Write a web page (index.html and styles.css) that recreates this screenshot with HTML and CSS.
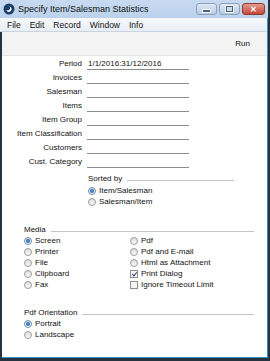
FILE: index.html
```html
<!DOCTYPE html>
<html lang="en">
<head>
  <meta charset="UTF-8">
  <title>Specify Item/Salesman Statistics</title>
  <link rel="stylesheet" href="styles.css">
</head>
<body>
  <div class="window">
    <div class="titlebar">
      <svg class="app-icon" width="12" height="12" viewBox="0 0 12 12">
        <circle cx="6" cy="6" r="5.5" fill="#1d3f6e"/>
        <path d="M3.2 7.8 C4.5 9.6 8 9.2 8.6 6.6 C8.9 5 7.6 3.6 6.2 3.2 C7.4 4.2 7.4 6 6.2 6.8 C5.2 7.5 4 7.4 3.2 7.8 Z" fill="#fff"/>
      </svg>
      <span class="title">Specify Item/Salesman Statistics</span>
      <div class="win-btns">
        <div class="win-btn"><span class="min-glyph"></span></div>
        <div class="win-btn"><span class="max-glyph"></span></div>
        <div class="win-btn close">&#x2715;</div>
      </div>
    </div>
    <div class="menubar">
      <span>File</span>
      <span>Edit</span>
      <span>Record</span>
      <span>Window</span>
      <span>Info</span>
    </div>
    <div class="toolbar">
      <span class="run">Run</span>
    </div>
    <div class="content">
      <div class="fields">
        <div class="row"><label>Period</label><div class="field">1/1/2016:31/12/2016</div></div>
        <div class="row"><label>Invoices</label><div class="field"></div></div>
        <div class="row"><label>Salesman</label><div class="field"></div></div>
        <div class="row"><label>Items</label><div class="field"></div></div>
        <div class="row"><label>Item Group</label><div class="field"></div></div>
        <div class="row"><label>Item Classification</label><div class="field"></div></div>
        <div class="row"><label>Customers</label><div class="field"></div></div>
        <div class="row"><label>Cust. Category</label><div class="field"></div></div>
      </div>

      <div class="group sorted">
        <div class="group-head"><span>Sorted by</span><i></i></div>
        <div class="opt"><span class="radio on"></span>Item/Salesman</div>
        <div class="opt"><span class="radio"></span>Salesman/Item</div>
      </div>

      <div class="group media">
        <div class="group-head"><span>Media</span><i></i></div>
        <div class="cols">
          <div>
            <div class="opt"><span class="radio on"></span>Screen</div>
            <div class="opt"><span class="radio"></span>Printer</div>
            <div class="opt"><span class="radio"></span>File</div>
            <div class="opt"><span class="radio"></span>Clipboard</div>
            <div class="opt"><span class="radio"></span>Fax</div>
          </div>
          <div>
            <div class="opt"><span class="radio"></span>Pdf</div>
            <div class="opt"><span class="radio"></span>Pdf and E-mail</div>
            <div class="opt"><span class="radio"></span>Html as Attachment</div>
            <div class="opt"><span class="check on"></span>Print Dialog</div>
            <div class="opt"><span class="check"></span>Ignore Timeout Limit</div>
          </div>
        </div>
      </div>

      <div class="group orient">
        <div class="group-head"><span>Pdf Orientation</span><i></i></div>
        <div class="opt"><span class="radio on"></span>Portrait</div>
        <div class="opt"><span class="radio"></span>Landscape</div>
      </div>
    </div>
  </div>
</body>
</html>
```

FILE: styles.css
```css
body {
  margin: 0;
  font-family: "Liberation Sans", Arial, sans-serif;
  font-size: 8px;
  color: #111;
  background-color: #26323c;
  width: 270px;
  height: 361px;
  overflow: hidden;
}

.window {
  width: 265px;
  height: 357px;
  margin-left: 2px;
  border-right: 1px solid #2a92c8;
  border-bottom: 1px solid #2a92c8;
  background-color: #ffffff;
  display: flex;
  flex-direction: column;
}

.titlebar {
  height: 18px;
  margin-left: -2px;
  margin-right: -1px;
  padding-left: 3px;
  display: flex;
  align-items: center;
  background: linear-gradient(#c7daf0, #bcd2ec);
}

.app-icon {
  flex: none;
}

.title {
  margin-left: 3px;
  font-size: 9px;
  color: #111;
}

.win-btns {
  margin-left: auto;
  margin-right: 3px;
  display: flex;
  gap: 2px;
}

.win-btn {
  width: 21px;
  height: 12px;
  border: 1px solid #8aa2bf;
  border-radius: 3px;
  background: linear-gradient(#dfe8f3, #b9cbe2);
  box-sizing: border-box;
  display: flex;
  align-items: center;
  justify-content: center;
}

.win-btn.close {
  width: 23px;
  border-color: #8f3a2e;
  background: linear-gradient(#e49a8c, #c4473a);
  color: #fff;
  font-size: 8px;
  font-weight: bold;
}

.min-glyph {
  width: 7px;
  height: 2px;
  margin-top: 3px;
  background-color: #4a5f78;
  border: 1px solid #f3f6fa;
}

.max-glyph {
  width: 5px;
  height: 4px;
  border: 1px solid #4a5f78;
  outline: 1px solid #f3f6fa;
}

.menubar {
  height: 13px;
  margin-left: -2px;
  padding-left: 7px;
  display: flex;
  align-items: center;
  gap: 9px;
  font-size: 8.5px;
  background: linear-gradient(#f6f8fb, #e9eef5);
  border-bottom: 1px solid #c9d4e2;
}

.toolbar {
  height: 23px;
  display: flex;
  align-items: center;
  justify-content: flex-end;
  padding-right: 17px;
  background-color: #f3f3f3;
  border-bottom: 1px solid #e4e4e4;
}

.content {
  flex: 1;
  padding-top: 3px;
}

.fields {
  display: flex;
  flex-direction: column;
}

.row {
  display: grid;
  grid-template-columns: 80px 102px;
  column-gap: 5px;
  height: 14px;
}

.row label {
  text-align: right;
  line-height: 10px;
}

.field {
  height: 10px;
  line-height: 10px;
  border-bottom: 1px solid #8c8c8c;
  padding-left: 1px;
}

.group-head {
  display: flex;
  align-items: center;
  height: 10px;
}

.group-head i {
  flex: 1;
  height: 1px;
  margin-left: 5px;
  margin-top: 4px;
  background-color: #c4c4c4;
}

.opt {
  display: flex;
  align-items: center;
  height: 11px;
}

.radio,
.check {
  width: 8px;
  height: 8px;
  margin-right: 3px;
  box-sizing: border-box;
  border: 1px solid #9a9a9a;
  background: linear-gradient(#dcdcdc, #fbfbfb);
  position: relative;
}

.radio {
  border-radius: 50%;
}

.radio.on {
  border-color: #6f8fb0;
}

.radio.on::after {
  content: "";
  position: absolute;
  left: 1px;
  top: 1px;
  width: 4px;
  height: 4px;
  border-radius: 50%;
  background: radial-gradient(#4aa0e6, #134f8e);
}

.check {
  border-color: #8e8f8f;
  background: #f4f4f4;
}

.check.on::after {
  content: "";
  position: absolute;
  left: 2px;
  top: 0px;
  width: 2px;
  height: 4px;
  border: solid #2d3f6c;
  border-width: 0 1px 1px 0;
  transform: rotate(40deg);
}

.sorted {
  margin-left: 86px;
  width: 146px;
  margin-top: 2px;
}

.sorted .group-head {
  margin-bottom: 2px;
}

.media {
  margin-left: 22px;
  width: 230px;
  margin-top: 17px;
}

.media .group-head {
  margin-bottom: 1px;
}

.cols {
  display: grid;
  grid-template-columns: 106px 1fr;
}

.orient {
  margin-left: 22px;
  width: 230px;
  margin-top: 17px;
}

.orient .group-head {
  margin-bottom: 1px;
}
```
